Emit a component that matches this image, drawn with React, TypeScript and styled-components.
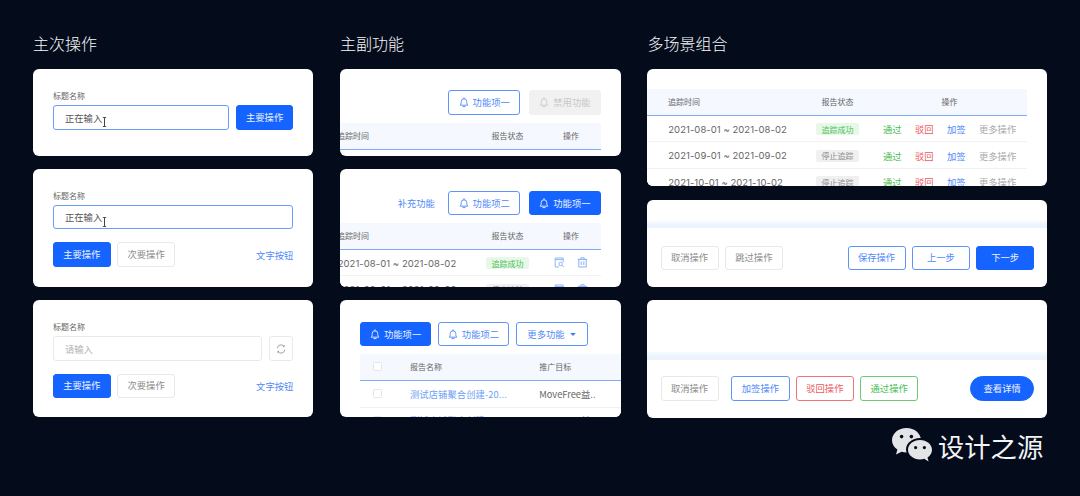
import React from "react";
import styled, { createGlobalStyle, css } from "styled-components";

const Global = createGlobalStyle`
  html, body { margin: 0; padding: 0; background: #040b1b; }
  body { width: 1080px; height: 496px; overflow: hidden; font-family: "Noto Sans CJK SC", "Inter", sans-serif; }
  * { box-sizing: border-box; }
`;

const BLUE = "#1664ff";
const LINE = "#5e95fb";

const Page = styled.div`
  position: relative;
  width: 1080px;
  height: 496px;
  padding: 33px 33px 0;
  display: grid;
  grid-template-columns: 280.3px 281px 399.7px;
  column-gap: 26.6px;
  align-items: start;
`;
const Column = styled.section`
  display: flex;
  flex-direction: column;
`;
const Heading = styled.h2`
  margin: 0 0 16px;
  font-size: 16px;
  line-height: 20px;
  font-weight: 300;
  color: #f6f7f9;
`;
const Stack = styled.div`
  display: flex;
  flex-direction: column;
  gap: 13.3px;
`;
const Card = styled.div<{ $h: number }>`
  height: ${(p) => p.$h}px;
  background: #fff;
  border-radius: 6px;
  overflow: hidden;
`;
const FormBody = styled.div`
  padding: 20.7px 20px 0;
`;
const Label = styled.div`
  font-size: 8px;
  line-height: 12px;
  color: #666;
  margin-bottom: 3.6px;
`;
const Line = styled.div<{ $between?: boolean; $mt?: number; $gap?: number }>`
  display: flex;
  align-items: center;
  gap: ${(p) => p.$gap ?? 6.4}px;
  margin-top: ${(p) => p.$mt ?? 0}px;
  ${(p) => p.$between && "justify-content: space-between;"}
`;
const Group = styled.div`
  display: flex;
  gap: 6.3px;
`;
const InputBox = styled.div<{ $idle?: boolean }>`
  position: relative;
  flex: 1;
  height: 24.2px;
  padding-left: 11px;
  display: flex;
  align-items: center;
  border: 1px solid ${(p) => (p.$idle ? "#e9e9e9" : "#6a9dfb")};
  border-radius: 3px;
  font-size: 9.3px;
  color: ${(p) => (p.$idle ? "#b4b4b4" : "#555")};
`;
const Caret = styled.svg`
  position: absolute;
  left: 47.5px;
  top: 10.5px;
  width: 5px;
  height: 10px;
`;

type Tone = "primary" | "ghost" | "line" | "red" | "green" | "disabled" | "pill";
const toneCss: Record<Tone, ReturnType<typeof css>> = {
  primary: css`background: ${BLUE}; border-color: ${BLUE}; color: #eef3ff;`,
  ghost: css`background: #fff; border-color: #e8e8e8; color: #8c8c8c;`,
  line: css`background: #fff; border-color: ${LINE}; color: #4f89f8;`,
  red: css`background: #fff; border-color: #ee7479; color: #ec5a60;`,
  green: css`background: #fff; border-color: #6cc974; color: #49bd52;`,
  disabled: css`background: #f1f1f1; border-color: #f1f1f1; color: #c8c8c8;`,
  pill: css`background: ${BLUE}; border-color: ${BLUE}; color: #eef3ff; border-radius: 13px;`,
};
const Btn = styled.button<{ $tone: Tone; $w?: number; $h?: number }>`
  width: ${(p) => p.$w ?? 58}px;
  height: ${(p) => p.$h ?? 24.5}px;
  flex: none;
  padding: 0;
  border: 1px solid;
  border-radius: 3px;
  display: inline-flex;
  align-items: center;
  justify-content: center;
  gap: 4px;
  font-family: inherit;
  font-size: 9.3px;
  line-height: 1;
  ${(p) => toneCss[p.$tone]}
`;
const IconBtn = styled.button`
  width: 24.6px;
  height: 24.5px;
  flex: none;
  padding: 0;
  background: #fff;
  border: 1px solid #e9e9e9;
  border-radius: 3px;
  display: inline-flex;
  align-items: center;
  justify-content: center;
`;
const TextLink = styled.span`
  font-size: 9.3px;
  color: #4f89f8;
`;
const Toolbar = styled.div<{ $left?: boolean; $top: number; $mb?: number; $gap?: number }>`
  display: flex;
  align-items: center;
  gap: ${(p) => p.$gap ?? 8.7}px;
  justify-content: ${(p) => (p.$left ? "flex-start" : "flex-end")};
  padding: ${(p) => p.$top}px ${(p) => (p.$left ? 0 : 20)}px 0 ${(p) => (p.$left ? 20 : 0)}px;
  margin-bottom: ${(p) => p.$mb ?? 7.9}px;
`;
const Sep = styled.span`
  margin-right: 4.6px;
`;
const GridRow = styled.div<{ $cols: string; $head?: boolean; $h: number; $w?: number; $ml?: number }>`
  display: grid;
  grid-template-columns: ${(p) => p.$cols};
  align-items: center;
  height: ${(p) => p.$h}px;
  width: ${(p) => (p.$w ? p.$w + "px" : "auto")};
  margin-left: ${(p) => p.$ml ?? 0}px;
  font-size: ${(p) => (p.$head ? 8 : 9.3)}px;
  color: #666;
  background: ${(p) => (p.$head ? "#f5f8fe" : "#fff")};
  border-bottom: 1px solid ${(p) => (p.$head ? "#7eaaf6" : "#f2f2f2")};
`;
const Cell = styled.div<{ $center?: boolean; $inset?: number }>`
  min-width: 0;
  white-space: nowrap;
  ${(p) => p.$center && "text-align: center;"}
  margin-left: ${(p) => p.$inset ?? 0}px;
`;
const DateText = styled.span`
  font-family: "Inter", "Noto Sans CJK SC", sans-serif;
  font-size: 9.5px;
  letter-spacing: 0.05px;
  color: #666;
`;
const Tag = styled.span<{ $ok?: boolean }>`
  display: inline-flex;
  align-items: center;
  justify-content: center;
  width: 43px;
  height: 12px;
  border-radius: 2px;
  font-size: 8px;
  background: ${(p) => (p.$ok ? "#e7f8e9" : "#f0f0f0")};
  color: ${(p) => (p.$ok ? "#4cc057" : "#8c8c8c")};
`;
const Actions = styled.div`
  display: flex;
  gap: 13.4px;
  margin-left: 11px;
  padding-top: 1px;
`;
const Act = styled.span<{ $c: string }>`
  font-size: 9.3px;
  color: ${(p) => p.$c};
`;
const IconCell = styled.div`
  display: flex;
  justify-content: flex-start;
  gap: 12px;
  padding-left: 13.6px;
`;
const Check = styled.span`
  display: block;
  width: 9px;
  height: 9px;
  margin-left: 13.6px;
  border: 1px solid #e6e6e6;
  border-radius: 1.5px;
  background: #fff;
`;
const NameLink = styled.span`
  font-size: 9.3px;
  color: #6ea0f5;
  letter-spacing: 0.01em;
`;
const Band = styled.div<{ $mt: number }>`
  height: 7.3px;
  margin-top: ${(p) => p.$mt}px;
  background: linear-gradient(#f8fbff, #ebf3fe 60%);
`;
const Footer = styled.div<{ $mt: number }>`
  display: flex;
  justify-content: space-between;
  padding: ${(p) => p.$mt}px 13px 0 13.1px;
`;
const WideGroup = styled(Group)`
  margin-right: auto;
  margin-left: 12.7px;
`;
const Mark = styled.div`
  position: absolute;
  left: 892px;
  top: 428px;
  display: flex;
  align-items: center;
  gap: 4px;
  color: #f2f3f5;
  font-size: 26.3px;
  line-height: 36px;
  font-weight: 400;
`;

const Bell = ({ c = "currentColor" }: { c?: string }) => (
  <svg width="10" height="11" viewBox="0 0 10 11" fill="none" stroke={c} strokeWidth="0.9">
    <path d="M1.2 8.2c.7-.7 1-1.3 1-2.5V4.6a2.8 2.8 0 0 1 5.6 0v1.1c0 1.2.3 1.8 1 2.5z" strokeLinejoin="round" />
    <path d="M5 .7v1.1M3.9 9.6h2.2" strokeLinecap="round" />
  </svg>
);
const Refresh = () => (
  <svg width="10" height="10" viewBox="0 0 10 10" fill="none" stroke="#8a8a8a" strokeWidth="0.8">
    <path d="M1.2 4.2A3.9 3.9 0 0 1 8 2.2" />
    <path d="M8.8 5.8A3.9 3.9 0 0 1 2 7.8" />
    <path d="M8.3 1.2v1.4H6.9M1.7 8.8V7.4h1.4" />
  </svg>
);
const ReportIcon = () => (
  <svg width="11" height="11" viewBox="0 0 11 11" fill="none" stroke="#85adf6" strokeWidth="0.9">
    <path d="M5 10H1.2V1h8v4.2" />
    <path d="M1.2 2.6h8" />
    <circle cx="6.6" cy="7" r="1.8" />
    <path d="M8 8.4l1.8 1.6" />
  </svg>
);
const TrashIcon = () => (
  <svg width="11" height="11" viewBox="0 0 11 11" fill="none" stroke="#7aa6f5" strokeWidth="0.9">
    <path d="M.8 2.4h9.4M3.8 2.2V.8h3.4v1.4" />
    <path d="M1.8 2.4V10h7.4V2.4" />
    <path d="M4.2 4.4v3.6M6.8 4.4v3.6" />
  </svg>
);
const Cursor = () => (
  <Caret viewBox="0 0 5 10" fill="none" stroke="#444" strokeWidth="1">
    <path d="M.8.5h3.4M.8 9.5h3.4" strokeWidth="0.9" />
    <path d="M2.5.5v9" />
  </Caret>
);
const WeChat = () => (
  <svg width="42" height="36" viewBox="0 0 42 36" aria-hidden="true">
    <path d="M14.5 0C6.5 0 0 5.5 0 12.2c0 3.8 2.1 7.2 5.4 9.4L4 26.6l5.6-2.9c1.5.4 3.2.7 4.9.7 8 0 14.5-5.4 14.5-12.2C29 5.5 22.5 0 14.5 0z" fill="#e4e5e7" />
    <path d="M28 10c-7.8 0-14 5.2-14 11.6s6.2 11.6 14 11.6c1.5 0 3-.2 4.4-.6l5.4 3-1.4-4.8c3.4-2.2 5.6-5.5 5.6-9.2C42 15.2 35.8 10 28 10z" fill="#040b1b" />
    <path d="M28 12c-6.6 0-12 4.4-12 9.7s5.4 9.7 12 9.7c1.5 0 2.9-.2 4.2-.6l4.4 2.6-1.1-4c2.9-1.8 4.5-4.6 4.5-7.7C40 16.4 34.6 12 28 12z" fill="#e4e5e7" />
    <circle cx="9.6" cy="8.6" r="1.8" fill="#040b1b" />
    <circle cx="19.4" cy="8.6" r="1.8" fill="#040b1b" />
    <circle cx="23.6" cy="19.6" r="1.6" fill="#040b1b" />
    <circle cx="32.4" cy="19.6" r="1.6" fill="#040b1b" />
  </svg>
);

const MID = "134px 67px 60px";
const RIGHT = "155.5px 69px 155px";
const LIST = "50px 129.3px 1fr";

const DataRow = ({ date, ok }: { date: string; ok: boolean }) => (
  <GridRow $cols={RIGHT} $h={26.7} $w={379.5}>
    <Cell $inset={20.8}><DateText>{date}</DateText></Cell>
    <Cell $center><Tag $ok={ok}>{ok ? "追踪成功" : "停止追踪"}</Tag></Cell>
    <Actions>
      <Act $c="#49bd52">通过</Act>
      <Act $c="#ec5a60">驳回</Act>
      <Act $c="#4f89f8">加签</Act>
      <Act $c="#aaa">更多操作</Act>
    </Actions>
  </GridRow>
);

const MidHead = () => (
  <GridRow $cols={MID} $head $h={27} $w={261}>
    <Cell $inset={-3}>追踪时间</Cell>
    <Cell $center>报告状态</Cell>
    <Cell $center>操作</Cell>
  </GridRow>
);

export default function App() {
  return (
    <>
      <Global />
      <Page>
        <Column>
          <Heading>主次操作</Heading>
          <Stack>
            <Card $h={86.7}>
              <FormBody>
                <Label>标题名称</Label>
                <Line $gap={7}>
                  <InputBox>正在输入<Cursor /></InputBox>
                  <Btn $tone="primary" $w={57.4}>主要操作</Btn>
                </Line>
              </FormBody>
            </Card>
            <Card $h={117.7}>
              <FormBody>
                <Label>标题名称</Label>
                <Line>
                  <InputBox>正在输入<Cursor /></InputBox>
                </Line>
                <Line $between $mt={13}>
                  <Group>
                    <Btn $tone="primary" $w={57.6}>主要操作</Btn>
                    <Btn $tone="ghost" $w={58.4}>次要操作</Btn>
                  </Group>
                  <TextLink>文字按钮</TextLink>
                </Line>
              </FormBody>
            </Card>
            <Card $h={117.3}>
              <FormBody>
                <Label>标题名称</Label>
                <Line>
                  <InputBox $idle>请输入</InputBox>
                  <IconBtn><Refresh /></IconBtn>
                </Line>
                <Line $between $mt={13}>
                  <Group>
                    <Btn $tone="primary" $w={57.6}>主要操作</Btn>
                    <Btn $tone="ghost" $w={58.4}>次要操作</Btn>
                  </Group>
                  <TextLink>文字按钮</TextLink>
                </Line>
              </FormBody>
            </Card>
          </Stack>
        </Column>

        <Column>
          <Heading>主副功能</Heading>
          <Stack>
            <Card $h={86.7}>
              <Toolbar $top={21.3}>
                <Btn $tone="line" $w={72}><Bell />功能项一</Btn>
                <Btn $tone="disabled" $w={72}><Bell />禁用功能</Btn>
              </Toolbar>
              <MidHead />
            </Card>
            <Card $h={117.7}>
              <Toolbar $top={22} $mb={7.5}>
                <TextLink><Sep>补充功能</Sep></TextLink>
                <Btn $tone="line" $w={72}><Bell />功能项二</Btn>
                <Btn $tone="primary" $w={72}><Bell />功能项一</Btn>
              </Toolbar>
              <MidHead />
              <GridRow $cols={MID} $h={26.5} $w={261}>
                <Cell $inset={-2.2}><DateText>2021-08-01 ~ 2021-08-02</DateText></Cell>
                <Cell $center><Tag $ok>追踪成功</Tag></Cell>
                <IconCell><ReportIcon /><TrashIcon /></IconCell>
              </GridRow>
              <GridRow $cols={MID} $h={26.5} $w={261}>
                <Cell $inset={-2.2}><DateText>2021-09-01 ~ 2021-09-02</DateText></Cell>
                <Cell $center><Tag>停止追踪</Tag></Cell>
                <IconCell><ReportIcon /><TrashIcon /></IconCell>
              </GridRow>
            </Card>
            <Card $h={117.3}>
              <Toolbar $left $top={22} $mb={7.4} $gap={6.4}>
                <Btn $tone="primary" $w={71.4}><Bell />功能项一</Btn>
                <Btn $tone="line" $w={71.6}><Bell />功能项二</Btn>
                <Btn $tone="line" $w={72.6}>更多功能<svg width="8" height="5" viewBox="0 0 8 5"><path d="M1.2 1h5.6L4 4z" fill="#3f80f7" /></svg></Btn>
              </Toolbar>
              <GridRow $cols={LIST} $head $h={27} $w={300} $ml={20}>
                <Check />
                <Cell>报告名称</Cell>
                <Cell>推广目标</Cell>
              </GridRow>
              <GridRow $cols={LIST} $h={26.7} $w={300} $ml={20}>
                <Check />
                <Cell><NameLink>测试店铺聚合创建-20...</NameLink></Cell>
                <Cell>MoveFree益..</Cell>
              </GridRow>
              <GridRow $cols={LIST} $h={26.7} $w={300} $ml={20}>
                <Check />
                <Cell><NameLink>测试店铺聚合创建-20...</NameLink></Cell>
                <Cell>MoveFree益..</Cell>
              </GridRow>
            </Card>
          </Stack>
        </Column>

        <Column>
          <Heading>多场景组合</Heading>
          <Stack>
            <Card $h={117.4}>
              <Toolbar $top={20} $mb={0} />
              <GridRow $cols={RIGHT} $head $h={26.7} $w={379.5}>
                <Cell $inset={20.5}>追踪时间</Cell>
                <Cell $center>报告状态</Cell>
                <Cell $center>操作</Cell>
              </GridRow>
              <DataRow date="2021-08-01 ~ 2021-08-02" ok />
              <DataRow date="2021-09-01 ~ 2021-09-02" ok={false} />
              <DataRow date="2021-10-01 ~ 2021-10-02" ok={false} />
            </Card>
            <Card $h={87}>
              <Band $mt={21.3} />
              <Footer $mt={17.3}>
                <Group>
                  <Btn $tone="ghost">取消操作</Btn>
                  <Btn $tone="ghost">跳过操作</Btn>
                </Group>
                <Group>
                  <Btn $tone="line">保存操作</Btn>
                  <Btn $tone="line">上一步</Btn>
                  <Btn $tone="primary">下一步</Btn>
                </Group>
              </Footer>
            </Card>
            <Card $h={117.6}>
              <Band $mt={52.3} />
              <Footer $mt={16.7}>
                <Btn $tone="ghost">取消操作</Btn>
                <WideGroup>
                  <Btn $tone="line" $w={58.3}>加签操作</Btn>
                  <Btn $tone="red">驳回操作</Btn>
                  <Btn $tone="green">通过操作</Btn>
                </WideGroup>
                <Btn $tone="pill" $w={64}>查看详情</Btn>
              </Footer>
            </Card>
          </Stack>
        </Column>

        <Mark><WeChat />设计之源</Mark>
      </Page>
    </>
  );
}
